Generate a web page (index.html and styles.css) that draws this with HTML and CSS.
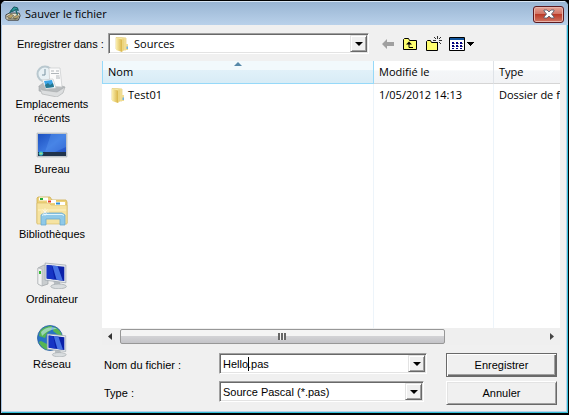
FILE: index.html
```
<!DOCTYPE html>
<html lang="fr">
<head>
    <meta charset="UTF-8">
    <title>Sauver le fichier</title>
    <link rel="stylesheet" href="styles.css">
</head>
<body>
    <!-- Folder used in the combo box and in the file list -->
    <svg class="symbols" aria-hidden="true">
        <defs>
            <linearGradient id="folderFront" x1="0" x2="1" y1="0" y2="0">
                <stop offset="0" stop-color="#fbefb0"/>
                <stop offset="1" stop-color="#d9b548"/>
            </linearGradient>
            <linearGradient id="screenBlue" x1="0" x2="1" y1="0" y2="1">
                <stop offset="0" stop-color="#1c50c0"/>
                <stop offset="0.5" stop-color="#3c78e0"/>
                <stop offset="1" stop-color="#1c48c0"/>
            </linearGradient>
            <symbol id="folder" viewBox="0 0 16 16">
                <path d="M2 1.500h5l5 .5v12H7L2 13z" fill="#f6e8a4" stroke="#e2cb7c" stroke-width=".7"/>
                <path d="M8 2h4v12H8z" fill="#f0dc92"/>
                <path d="M2 2l6 1.500V16l-6-2z" fill="url(#folderFront)"/>
                <path d="M8 3.500l2-1V14l-2 2z" fill="#ecd57f"/>
                <path d="M12 8h2v6h-2z" fill="#efdc94"/>
                <path d="M12.500 10.500H14V13h-1.500z" fill="#6db0e4"/>
            </symbol>
            <symbol id="monitor" viewBox="0 0 24 26">
                <path d="M10 18l6 0 1 5h-6z" fill="#b8bec2"/>
                <ellipse cx="15" cy="23.500" rx="7.500" ry="2.300" fill="#d9dddf" stroke="#a3a9ad" stroke-width=".7"/>
                <path d="M2 1l20 2v17L2 17.500z" fill="#e6eaee" stroke="#9aa3aa" stroke-width=".7"/>
                <path d="M3.500 2.800l17 1.700v13.800L3.500 16z" fill="#0a20a8"/>
                <path d="M9 3.300l5 .6 5 14-6-.7z" fill="#4672e4"/>
                <path d="M3.500 2.800l5 .6 2.500 13.500-7.500-1z" fill="#1634c4"/>
            </symbol>
        </defs>
    </svg>

    <div class="window">
        <div class="title-bar">
            <svg class="app-icon" viewBox="0 0 18 18" aria-hidden="true">
                <path d="M1 10l4-2h11l1 3-2 5H3l-2-2z" fill="#e9e4c8" stroke="#333" stroke-width="1"/>
                <path d="M2 12l5-3 3 2-4 3zM9 13l5-3 2 2-5 3z" fill="#b8a468" stroke="#444" stroke-width=".6"/>
                <path d="M3 14.500h12" stroke="#4a4a38"/>
                <path d="M6 6l4-5 4 1 1 3-3-1-3 2z" fill="#2d9a9c" stroke="#0d4c52"/>
                <path d="M12 4l2 6M8 5l-3 3" stroke="#18666b" stroke-width="1.500"/>
            </svg>
            <h1 class="title">Sauver le fichier</h1>
            <button class="close-btn" type="button" aria-label="Fermer">
                <svg viewBox="0 0 12 10" width="12" height="10" aria-hidden="true">
                    <path d="M1 1h3l2 2 2-2h3v1L8.500 5 11 8v1H8L6 7 4 9H1V8l2.500-3L1 2z" fill="#fff" stroke="#59606e" stroke-width=".9"/>
                </svg>
            </button>
        </div>

        <form class="content">
            <div class="toolbar">
                <label class="toolbar-label" for="folderSelect">Enregistrer dans :</label>
                <div class="combo combo-folder">
                    <svg class="folder-icon" aria-hidden="true"><use href="#folder"/></svg>
                    <select id="folderSelect">
                        <option>Sources</option>
                    </select>
                    <span class="combo-arrow"></span>
                </div>
                <div class="tools">
                    <button class="tool" type="button" aria-label="Retour">
                        <svg viewBox="0 0 14 12" width="14" height="12"><path d="M1 6l5-5v3h7v4H6v3z" fill="#a0a0a0"/></svg>
                    </button>
                    <button class="tool" type="button" aria-label="Dossier parent">
                        <svg viewBox="0 0 16 14" width="16" height="14">
                            <path d="M1.500 12.500v-10l1-1h4l1 2h7v9z" fill="#ffff70" stroke="#000"/>
                            <path d="M4 7.500l3-3 3 3z"/>
                            <path d="M7 6v4.500h4" fill="none" stroke="#000"/>
                        </svg>
                    </button>
                    <button class="tool" type="button" aria-label="Nouveau dossier">
                        <svg viewBox="0 0 17 16" width="17" height="16">
                            <path d="M1.500 14.500v-9l1-1h3l1 2h6v8z" fill="#ffff70" stroke="#000"/>
                            <path d="M12.500 0v3M12.500 6v3M8 4.500h3M14 4.500h3M9 1l2 2M14 6l2 2M16 1l-2 2" stroke="#000" stroke-width=".8"/>
                        </svg>
                    </button>
                    <button class="tool" type="button" aria-label="Affichage">
                        <svg viewBox="0 0 26 14" width="26" height="14">
                            <path d="M.5.500h15v13H.5z" fill="#fff" stroke="#000"/>
                            <path d="M1 1h14v2H1z" fill="#10549c"/>
                            <path d="M3 5h2v2H3zM7 5h2v2H7zM11 5h2v2h-2zM3 8h2v2H3zM7 8h2v2H7zM11 8h2v2h-2zM3 11h2v1H3zM7 11h2v1H7zM11 11h2v1h-2z" fill="#000080"/>
                            <path d="M5 6.500h1M9 6.500h1M13 6.500h1M5 9.500h1M9 9.500h1M13 9.500h1" stroke="#777"/>
                            <path d="M18 5h7v1h-1v1h-1v1h-1v1h-1V8h-1V7h-1V6h-1z"/>
                        </svg>
                    </button>
                </div>
            </div>

            <nav class="places">
                <button class="place" type="button">
                    <svg class="place-icon" viewBox="0 0 32 32" aria-hidden="true">
                        <path d="M3 21l7-5 19 6-8 8-18-4z" fill="#b7bbbd" stroke="#a5a9ab" stroke-width=".6"/>
                        <circle cx="9" cy="9" r="7.500" fill="#e8f1f5" stroke="#b9c8cf" stroke-width="2"/>
                        <path d="M9 4v6H6" fill="none" stroke="#7a94a2"/>
                        <path d="M13 3h11l2 19-12-1z" fill="#fbfbfb" stroke="#c9cbcd" stroke-width=".7"/>
                        <path d="M15 6h3M20 6h3M15 8.500h8M20 11h3.500M20 13h4" stroke="#b0b5b9"/>
                        <path d="M6 15l11-1 3 9-10 1z" fill="#fff" stroke="#c4c8ca" stroke-width=".7"/>
                        <path d="M8 16l8-1 2 7-8 1z" fill="#3ba4e6"/>
                        <path d="M9 20l3-2 2 2 3-2 1 4-8 1z" fill="#28778e"/>
                        <path d="M3 21l3 4 15 2 8-5-2 6-6 4-15-3z" fill="#dcdedf" stroke="#a8abad" stroke-width=".6"/>
                    </svg>
                    <span>Emplacements récents</span>
                </button>
                <button class="place" type="button">
                    <svg class="place-icon" viewBox="0 0 32 32" aria-hidden="true">
                        <path d="M1 3h30v24H1z" fill="#c6cbd0" stroke="#b0b5ba" stroke-width=".6"/>
                        <path d="M2 4h28v22H2z" fill="url(#screenBlue)"/>
                        <path d="M15 4h15v13L19 22H9z" fill="#5a98f0" opacity=".4"/>
                        <path d="M2 22h28v4H2z" fill="#20334c"/>
                        <circle cx="5" cy="23.500" r="2.300" fill="#30b8d0"/>
                        <path d="M5 22v3M3.500 23.500h3" stroke="#c8e878" stroke-width=".6"/>
                    </svg>
                    <span>Bureau</span>
                </button>
                <button class="place" type="button">
                    <svg class="place-icon" viewBox="0 0 32 32" aria-hidden="true">
                        <path d="M1 28V3l1-1h12l2 3h14l1 2v21z" fill="#edd27b" stroke="#cfae52" stroke-width=".8"/>
                        <path d="M3 2.500h9v3H3z" fill="#fff"/>
                        <path d="M4 3h3v2H4z" fill="#20ae3a"/>
                        <path d="M11 5h9v3h-9z" fill="#fff"/>
                        <path d="M12 5.500h3v2h-3z" fill="#e53924"/>
                        <path d="M1 8h12l2 2h16v19H1z" fill="#f6e3a1" stroke="#d6b960" stroke-width=".6"/>
                        <path d="M19 7h10v3H19z" fill="#fff"/>
                        <path d="M20 7.500h4v2h-4z" fill="#2c8fd8"/>
                        <path d="M2 15h28" stroke="#fff3c4"/>
                        <path d="M5 30V20l3-2h18l3 2v10h-5v-6H10v6z" fill="#8fc9e8" stroke="#6aaace" stroke-width=".8"/>
                        <path d="M6 20.500l2-1h18l2 1" fill="none" stroke="#dff4fd"/>
                        <path d="M9 13v8M5 17h8M6.500 14.500l5 5M11.500 14.500l-5 5" stroke="#fff" stroke-width=".5"/>
                    </svg>
                    <span>Bibliothèques</span>
                </button>
                <button class="place" type="button">
                    <svg class="place-icon" viewBox="0 0 32 32" aria-hidden="true">
                        <path d="M2 8l6-3 4 2v17l-6 2-4-2z" fill="#c9cdcf" stroke="#9ba1a4" stroke-width=".7"/>
                        <path d="M2 8l4 1v17l-4-2z" fill="#f2f3f3" stroke="#a5aaad" stroke-width=".5"/>
                        <path d="M3 11h2v3H3z" fill="#35bc32"/>
                        <use href="#monitor" x="7" y="2" width="25" height="27"/>
                    </svg>
                    <span>Ordinateur</span>
                </button>
                <button class="place" type="button">
                    <svg class="place-icon" viewBox="0 0 32 32" aria-hidden="true">
                        <circle cx="14" cy="13" r="12.500" fill="#2873c4" stroke="#2860a0" stroke-width=".8"/>
                        <path d="M4 6c5-5 10-5 12-5l-1 4-4 3-2 5-6-2zM18 2c5 2 8 6 8 10l-5-3-4-3zM5 16l6 3 1 6c-5-1-8-5-9-8z" fill="#56b553"/>
                        <path d="M5 7c4-5 12-6 16-3-5 0-10 2-15 7z" fill="#c9ecf5" opacity=".6"/>
                        <use href="#monitor" x="9" y="8" width="23" height="24"/>
                    </svg>
                    <span>Réseau</span>
                </button>
            </nav>

            <div class="main">
                <div class="file-list">
                    <div class="table-container">
                        <table>
                            <thead>
                                <tr>
                                    <th class="col-name sorted">Nom</th>
                                    <th class="col-date">Modifié le</th>
                                    <th>Type</th>
                                </tr>
                            </thead>
                            <tbody>
                                <tr class="file-row">
                                    <td><span class="file-name"><svg class="folder-icon" aria-hidden="true"><use href="#folder"/></svg>Test01</span></td>
                                    <td>1/05/2012 14:13</td>
                                    <td>Dossier de fichiers</td>
                                </tr>
                                <tr>
                                    <td></td>
                                    <td></td>
                                    <td></td>
                                </tr>
                            </tbody>
                        </table>
                    </div>
                    <div class="scrollbar" aria-hidden="true">
                        <svg class="scroll-arrow" viewBox="0 0 18 17"><path d="M10 5v7L6 8.500z" fill="#333"/></svg>
                        <div class="scroll-track"><div class="scroll-thumb"></div></div>
                        <svg class="scroll-arrow" viewBox="0 0 18 17"><path d="M8 5v7l4-3.500z" fill="#444"/></svg>
                    </div>
                </div>

                <div class="fields">
                    <label for="fileName">Nom du fichier :</label>
                    <div class="combo">
                        <input id="fileName" type="text" value="Hello.pas">
                        <span class="text-caret"></span>
                        <span class="combo-arrow"></span>
                    </div>
                    <button class="button default" type="submit">Enregistrer</button>

                    <label for="fileType">Type :</label>
                    <div class="combo combo-type">
                        <select id="fileType">
                            <option>Source Pascal (*.pas)</option>
                        </select>
                        <span class="combo-arrow"></span>
                    </div>
                    <button class="button" type="button">Annuler</button>
                </div>
            </div>
        </form>
    </div>
</body>
</html>
```

FILE: styles.css
```
* {
    margin: 0;
    padding: 0;
    box-sizing: border-box;
}

body {
    background: #000;
    color: #000;
    font-family: "Liberation Sans", Arial, sans-serif;
    font-size: 11px;
    line-height: 14px;
}

button, input, select {
    font: inherit;
    color: inherit;
}

.symbols {
    position: absolute;
    width: 0;
    height: 0;
}

.window {
    display: flex;
    flex-direction: column;
    min-height: 100vh;
    border: 1px solid #000;
    border-bottom-width: 2px;
    border-radius: 6px 6px 0 0;
    background: #f0f0f0;
    box-shadow: inset 1px 0 #a8c4e2, inset -1px -1px #35c0d8, inset -2px -2px #b8d0e8;
    overflow: hidden;
}

/* Title bar */
.title-bar {
    display: flex;
    align-items: center;
    gap: 4px;
    height: 24px;
    padding: 2px 4px 0;
    background: linear-gradient(#98b4d2, #b9d1ea);
    box-shadow: inset 0 1px #d8e6f4;
}

.app-icon {
    width: 16px;
    height: 16px;
}

.title {
    flex: 1;
    font-family: "Open Sans", "Segoe UI", sans-serif;
    font-size: 11px;
    font-weight: 400;
}

.close-btn {
    display: flex;
    align-items: center;
    justify-content: center;
    width: 31px;
    height: 17px;
    border: 1px solid #5c1a20;
    border-radius: 3px;
    background: linear-gradient(#e3a497 0%, #d27465 45%, #bb3b28 50%, #cf7563 100%);
    box-shadow: inset 0 0 0 1px #e8b4aa;
}

/* Dialog body */
.content {
    flex: 1;
    display: grid;
    grid-template-columns: 101px 1fr;
    grid-template-rows: auto 1fr;
    padding: 8px 8px 8px 0;
}

.toolbar {
    grid-column: 1 / 3;
    display: flex;
    align-items: center;
    height: 28px;
    padding-bottom: 7px;
}

.toolbar-label {
    width: 107px;
    padding-left: 16px;
    white-space: nowrap;
}

.combo {
    display: flex;
    align-items: center;
    height: 21px;
    border: 1px solid;
    border-color: #a0a0a0 #fff #fff #a0a0a0;
    background: #fff;
    box-shadow: inset 1px 1px #696969, inset -1px -1px #e3e3e3;
    padding: 2px 1px 2px 2px;
}

.combo-folder {
    flex: 0 1 261px;
    padding-left: 5px;
}

.combo select,
.combo input {
    flex: 1;
    min-width: 0;
    border: none;
    outline: none;
    background: transparent;
    appearance: none;
    height: 16px;
    padding-left: 1px;
}

.combo-folder select {
    padding-left: 4px;
    font-family: "Open Sans", "Segoe UI", sans-serif;
    font-size: 11px;
}

.combo-arrow {
    display: flex;
    align-items: center;
    justify-content: center;
    width: 17px;
    height: 17px;
    border: 1px solid;
    border-color: #e3e3e3 #696969 #696969 #e3e3e3;
    background: #f0f0f0;
    box-shadow: inset 1px 1px #fff, inset -1px -1px #a0a0a0;
}

.combo-arrow::before {
    content: "";
    border: 4px solid transparent;
    border-top-color: #000;
    border-bottom: none;
}

.folder-icon {
    flex: none;
    width: 16px;
    height: 16px;
}

.tools {
    display: flex;
    align-items: center;
    gap: 7px;
    padding-left: 12px;
}

.tool {
    display: flex;
    border: none;
    background: none;
}

/* Places bar */
.places {
    display: flex;
    flex-direction: column;
    padding-top: 4px;
}

.place {
    display: flex;
    flex-direction: column;
    align-items: center;
    height: 65px;
    padding: 0 13px 0 14px;
    border: none;
    background: none;
}

.place-icon {
    flex: none;
    width: 32px;
    height: 32px;
}

.main {
    display: flex;
    flex-direction: column;
    gap: 8px;
}

/* File list */
.file-list {
    flex: 1;
    display: flex;
    flex-direction: column;
    background: #fff;
}

.table-container {
    flex: 1;
    display: flex;
    overflow: hidden;
}

table {
    width: 100%;
    table-layout: fixed;
    border-collapse: separate;
    border-spacing: 0;
    font-family: "Open Sans", "Segoe UI", sans-serif;
    font-size: 11px;
}

th, td {
    padding: 0 0 0 5px;
    border-right: 1px solid #edf4fa;
    text-align: left;
    font-weight: 400;
    white-space: nowrap;
    overflow: hidden;
}

th {
    height: 23px;
    border-right-color: #dfe3e8;
    border-bottom: 1px solid #d5d5d5;
    background: linear-gradient(#fff 40%, #f4f6f8 45%, #f2f3f5);
}

th:last-child, td:last-child {
    border-right: none;
}

.col-name {
    width: 272px;
}

.col-date {
    width: 120px;
}

.sorted {
    position: relative;
    border-left: 1px solid #96d9f9;
    border-right-color: #96d9f9;
    border-bottom-color: #96d9f9;
    background: linear-gradient(#f2f9fc 39%, #e1f1f9 40%, #d8ecf6);
}

.sorted::after {
    content: "";
    position: absolute;
    top: 1px;
    left: 50%;
    margin-left: -4px;
    border: 4px solid transparent;
    border-top: none;
    border-bottom-color: #5688a8;
}

.file-row td {
    height: 21px;
}

.file-name {
    display: flex;
    align-items: center;
    gap: 2px;
    padding-left: 3px;
}

/* Scroll bar */
.scrollbar {
    display: flex;
    height: 17px;
    background: #efefef;
}

.scroll-arrow {
    width: 18px;
    height: 17px;
}

.scroll-track {
    flex: 1;
    display: flex;
}

.scroll-thumb {
    display: flex;
    align-items: center;
    justify-content: center;
    width: 77%;
    height: 15px;
    margin-top: 1px;
    border: 1px solid #979797;
    border-radius: 2px;
    background: linear-gradient(#f4f4f4 45%, #d2d2d5 50%, #c4c4c8);
}

.scroll-thumb::before {
    content: "";
    width: 8px;
    height: 7px;
    background: repeating-linear-gradient(90deg, #666 0 2px, #f4f4f4 2px 3px);
}

/* File name and type */
.fields {
    display: grid;
    grid-template-columns: 115px minmax(0, 208px) 1fr;
    row-gap: 4px;
    padding: 0 3px 0 2px;
}

.fields label {
    padding-top: 5px;
}

.combo-type {
    margin-right: 3px;
}

.text-caret {
    position: absolute;
    width: 1px;
    height: 14px;
    margin-left: 26px;
    background: #000;
}

.button {
    height: 24px;
    margin-left: 19px;
    border: 1px solid;
    border-color: #fff #696969 #696969 #fff;
    background: #f0f0f0;
    box-shadow: inset 1px 1px #e3e3e3, inset -1px -1px #a0a0a0;
}

.button.default {
    border-color: #696969;
    box-shadow: inset 1px 1px #fff, inset -1px -1px #696969, inset -2px -2px #a0a0a0;
}
```
